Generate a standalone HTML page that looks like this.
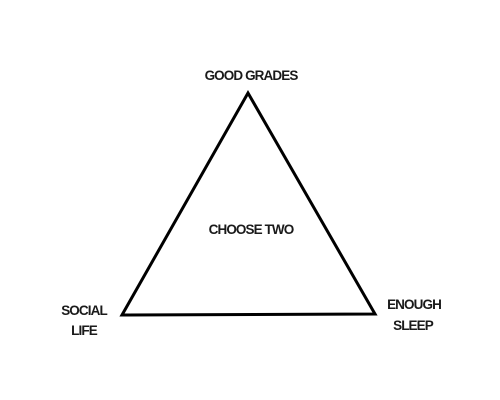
<!DOCTYPE html>
<html><head><style>
html,body{margin:0;padding:0;background:#fff;width:500px;height:400px;overflow:hidden}
svg text{font-family:"Liberation Sans",sans-serif;font-size:13.5px;fill:#1a1a1a;font-weight:bold;letter-spacing:-0.9px}
</style></head><body>
<svg width="500" height="400" xmlns="http://www.w3.org/2000/svg">
<polygon points="248,93 122,315 375,314" fill="none" stroke="#000" stroke-width="3" stroke-linejoin="miter"/>
<text x="251" y="80" text-anchor="middle">GOOD GRADES</text>
<text x="251" y="234" text-anchor="middle">CHOOSE TWO</text>
<text x="84" y="315" text-anchor="middle">SOCIAL</text>
<text x="84" y="335" text-anchor="middle">LIFE</text>
<text x="414" y="309" text-anchor="middle">ENOUGH</text>
<text x="413" y="330" text-anchor="middle">SLEEP</text>
</svg>
</body></html>
